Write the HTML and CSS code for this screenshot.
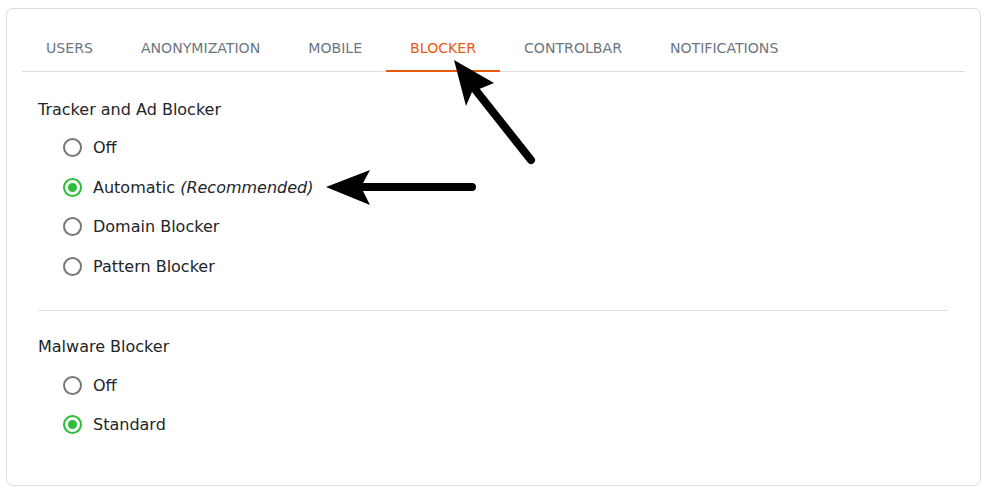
FILE: index.html
```html
<!DOCTYPE html>
<html>
<head>
<meta charset="utf-8">
<link rel="stylesheet" href="styles.css">
</head>
<body>
<div class="page">
  <div class="card">
    <nav class="tabs">
      <a class="tab">USERS</a>
      <a class="tab">ANONYMIZATION</a>
      <a class="tab">MOBILE</a>
      <a class="tab active">BLOCKER</a>
      <a class="tab">CONTROLBAR</a>
      <a class="tab">NOTIFICATIONS</a>
    </nav>
    <div class="content">
      <section class="group">
        <h3 class="group-title">Tracker and Ad Blocker</h3>
        <div class="option"><span class="radio"></span><span>Off</span></div>
        <div class="option"><span class="radio checked"></span><span>Automatic <em>(Recommended)</em></span></div>
        <div class="option"><span class="radio"></span><span>Domain Blocker</span></div>
        <div class="option"><span class="radio"></span><span>Pattern Blocker</span></div>
      </section>
      <hr class="divider">
      <section class="group">
        <h3 class="group-title">Malware Blocker</h3>
        <div class="option"><span class="radio"></span><span>Off</span></div>
        <div class="option"><span class="radio checked"></span><span>Standard</span></div>
      </section>
    </div>
  </div>
</div>
<svg class="arrows" width="991" height="496" viewBox="0 0 991 496">
  <line x1="531" y1="160" x2="474" y2="88" stroke="#000" stroke-width="8" stroke-linecap="round"/>
  <polygon points="454,60 494,83 472,92 466,106" fill="#000"/>
  <line x1="472" y1="187" x2="355" y2="187" stroke="#000" stroke-width="8" stroke-linecap="round"/>
  <polygon points="326,187 370,170 361,187 370,205" fill="#000"/>
</svg>
</body>
</html>
```
FILE: styles.css
```css
html, body {
  margin: 0;
  padding: 0;
  background: #fff;
}
body {
  font-family: "DejaVu Sans", sans-serif;
  color: #212529;
}
.page {
  padding: 8px 10px 0 6px;
}
.card {
  border: 1px solid #dcdcdc;
  border-radius: 7px;
  padding: 15px 15px 0 15px;
  box-sizing: border-box;
  height: 478px;
}
.tabs {
  display: flex;
  border-bottom: 1px solid #e0e0e0;
}
.tab {
  font-size: 14.1px;
  line-height: 20px;
  padding: 14px 24px 12px;
  margin-bottom: -1px;
  border-bottom: 2px solid transparent;
  color: #6c7681;
}
.tab.active {
  color: #e8590c;
  border-bottom-color: #e8590c;
}
.content {
  padding: 26px 17px 0 16px;
}
.group-title {
  margin: 0 0 6px;
  font-weight: normal;
  font-size: 16px;
  line-height: 24px;
}
.option {
  display: flex;
  align-items: center;
  height: 39.6px;
  padding-left: 25px;
  font-size: 16px;
}
.option em {
  font-style: italic;
}
.radio {
  width: 19px;
  height: 19px;
  box-sizing: border-box;
  border: 2px solid #767676;
  border-radius: 50%;
  margin-right: 11px;
  display: flex;
  align-items: center;
  justify-content: center;
}
.radio.checked {
  border-color: #2dbd3a;
}
.radio.checked::after {
  content: "";
  width: 9px;
  height: 9px;
  border-radius: 50%;
  background: #2dbd3a;
}
.divider {
  border: 0;
  border-top: 1px solid #e0e0e0;
  margin: 24px 0 24px;
}
.arrows {
  position: absolute;
  left: 0;
  top: 0;
  pointer-events: none;
}
```
